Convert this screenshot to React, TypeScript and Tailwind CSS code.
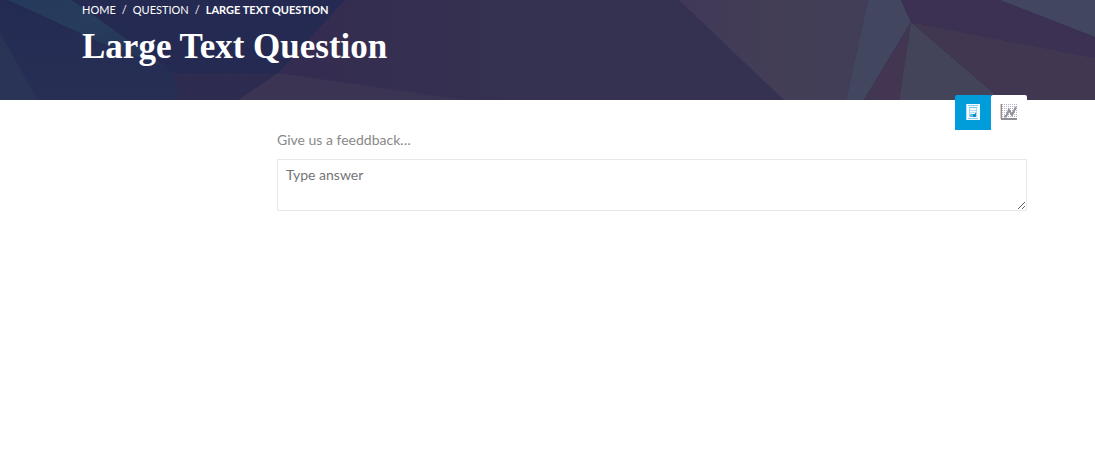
import React from "react";

function Facets() {
  return (
    <svg
      className="absolute inset-0 h-full w-full"
      viewBox="0 0 1095 100"
      preserveAspectRatio="none"
      aria-hidden="true"
    >
      <defs>
        <linearGradient id="teal" x1="0" y1="0" x2="1" y2="1">
          <stop offset="0" stopColor="#25395c" />
          <stop offset="0.4" stopColor="#273d5d" />
          <stop offset="1" stopColor="#262f55" />
        </linearGradient>
        <linearGradient id="navy" x1="0" y1="0" x2="0" y2="1">
          <stop offset="0" stopColor="#242b53" />
          <stop offset="1" stopColor="#272f55" />
        </linearGradient>
        <linearGradient id="dusk" x1="0" y1="0" x2="1" y2="0">
          <stop offset="0" stopColor="#403958" />
          <stop offset="0.5" stopColor="#433e56" />
          <stop offset="1" stopColor="#423e58" />
        </linearGradient>
        <linearGradient id="plum" gradientUnits="userSpaceOnUse" x1="278" y1="50" x2="500" y2="50">
          <stop offset="0" stopColor="#342c51" />
          <stop offset="1" stopColor="#353150" />
        </linearGradient>
      </defs>
      <rect width="1095" height="100" fill="#242a52" />
      <polygon points="0,0 0,33 38,100 180,100 173,73 20,8" fill="url(#navy)" />
      <polygon points="0,33 38,100 0,100" fill="#293456" />
      <polygon points="8,0 72,0 173,71 100,42" fill="url(#teal)" />
      <polygon points="72,0 345,0 278,73 173,72" fill="#242a52" />
      <polygon points="173,73 278,73 238,100 179,100" fill="#2e2b51" />
      <polygon points="345,0 680,0 785,100 238,100 278,73" fill="url(#plum)" />
      <polygon points="278,73 465,100 238,100" fill="#3b3453" />
      <polygon points="679,0 868,0 846,100 784,100" fill="url(#dusk)" />
      <polygon points="868,0 901,0 911,22 864,100 846,100" fill="#42475f" />
      <polygon points="911,22 899,100 864,100" fill="#433653" />
      <polygon points="911,22 1002,100 899,100" fill="#434359" />
      <polygon points="901,0 1000,0 1095,37 1095,58 911,22" fill="#3c3153" />
      <polygon points="1000,0 1095,0 1095,37" fill="#42465f" />
      <polygon points="911,22 1095,58 1095,100 1002,100" fill="#413751" />
    </svg>
  );
}

function FormIcon() {
  return (
    <svg width="16" height="16" viewBox="0 0 16 16" shapeRendering="crispEdges" aria-hidden="true">
      <rect x="1" width="14" height="16" fill="#f4fafd" />
      <rect x="1" width="1" height="16" fill="#b5dff2" />
      <path d="M3 1h10v1H3z" fill="#8fd0ed" />
      <path d="M4 3h8v1H4z" fill="#79c7e8" />
      <path d="M4 4h1v9H4zM11 4h1v9h-1z" fill="#a7d9ee" />
      <path d="M5 6h6v1H5zM5 8h6v1H5z" fill="#b5dff2" />
      <path d="M5 10h3v3H5z" fill="#62bde4" />
      <path d="M10 9h1v1h-1zM8 10h3v3H8z" fill="#168fc2" />
      <path d="M3 14h10v1H3z" fill="#8fd0ed" />
    </svg>
  );
}

function ChartIcon() {
  return (
    <svg width="18" height="16" viewBox="0 0 18 16" aria-hidden="true">
      <defs>
        <pattern id="dots" width="2" height="2" patternUnits="userSpaceOnUse">
          <rect width="1" height="1" fill="#b4b4c6" />
        </pattern>
      </defs>
      <rect x="2" width="15" height="15" fill="url(#dots)" shapeRendering="crispEdges" />
      <path d="M1 0h1v14h15v2H1z" fill="#918d95" shapeRendering="crispEdges" />
      <path d="M0 0h1v15H0z" fill="#e5c9b9" shapeRendering="crispEdges" />
      <path d="M4 12.5h2L9 6l3 5 4-8" fill="none" stroke="#918f98" strokeWidth="2" />
    </svg>
  );
}

export default function App() {
  return (
    <div className="min-h-screen bg-white font-['Lato',sans-serif]">
      <header className="relative h-[100px] overflow-hidden bg-[#353150]">
        <Facets />
        <div className="relative pr-[68px] pl-[82px] text-white">
          <nav aria-label="Breadcrumb">
            <ol className="flex pt-0.5 text-[11px] leading-4 uppercase">
              <li><a href="#home">Home</a></li>
              <li className="px-1.5" aria-hidden="true">/</li>
              <li><a href="#question">Question</a></li>
              <li className="px-1.5" aria-hidden="true">/</li>
              <li className="font-bold" aria-current="page">Large Text Question</li>
            </ol>
          </nav>
          <h1 className="mt-[9px] font-['Liberation_Serif',serif] text-[35px] leading-10 font-bold">
            Large Text Question
          </h1>
        </div>
      </header>
      <main className="relative pr-[68px] pl-[277px]">
        <div className="absolute -top-[5px] right-[68px] flex">
          <button
            type="button"
            aria-label="Form"
            aria-pressed="true"
            className="flex h-[35px] w-9 items-center justify-center rounded-tl-[2px] bg-[#009dda] pb-0.5"
          >
            <FormIcon />
          </button>
          <button
            type="button"
            aria-label="Results"
            aria-pressed="false"
            className="flex h-[35px] w-9 items-center justify-center rounded-t-[2px] bg-white pb-0.5"
          >
            <ChartIcon />
          </button>
        </div>
        <form className="pt-[30px]">
          <label htmlFor="answer" className="block text-sm leading-5 text-[#888888]">
            Give us a feeddback…
          </label>
          <textarea
            id="answer"
            rows={2}
            placeholder="Type answer"
            className="mt-[9px] block h-[52px] w-full resize border border-[#e8e8e8] bg-white px-2 py-[5px] text-sm leading-5 text-[#555555] outline-none placeholder:text-[#757575]"
          />
        </form>
      </main>
    </div>
  );
}
